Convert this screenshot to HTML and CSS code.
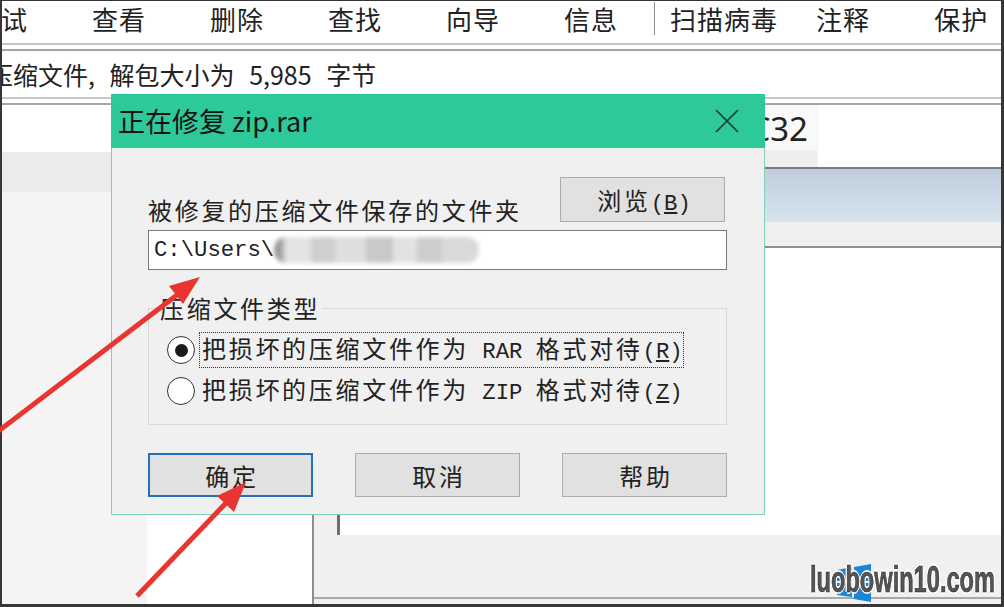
FILE: index.html
```html
<!doctype html>
<html lang="zh-CN">
<head>
	<meta charset="UTF-8">
	<title>正在修复 zip.rar</title>
	<link rel="stylesheet" href="styles.css">
</head>
<body>
	<div class="app">
		<div class="toolbar">
			<span class="tool first">试</span>
			<span class="tool">查看</span>
			<span class="tool">删除</span>
			<span class="tool">查找</span>
			<span class="tool">向导</span>
			<span class="tool">信息</span>
			<span class="tool-sep"></span>
			<span class="tool after-sep">扫描病毒</span>
			<span class="tool short-gap">注释</span>
			<span class="tool">保护</span>
		</div>
		<div class="rule"></div>
		<div class="info">压缩文件, 解包大小为 5,985 字节</div>
		<div class="rule"></div>
		<div class="main">
			<div class="tree">
				<div class="tree-top"></div>
				<div class="tree-band"></div>
			</div>
			<div class="files"></div>
			<div class="splitter"></div>
			<div class="detail">
				<div class="detail-box">
					<div class="list-head">
						<div class="col-name"></div>
						<div class="col-crc">CRC32</div>
						<div class="col-rest"></div>
					</div>
					<div class="row-selected"></div>
					<div class="row-plain"></div>
				</div>
				<div class="status-line"></div>
			</div>
		</div>
	</div>

	<!-- 修复对话框 -->
	<div class="dialog">
		<div class="dialog-title">
			<h1>正在修复 zip.rar</h1>
			<svg class="close" width="24" height="24" viewBox="0 0 24 24">
				<path d="M1 1L23 23M23 1L1 23" stroke="#1b3b31" stroke-width="1.7" fill="none"/>
			</svg>
		</div>
		<div class="dialog-body">
			<div class="path-row">
				<span class="path-label">被修复的压缩文件保存的文件夹</span>
				<button class="btn browse">浏览<span class="mono">(<u>B</u>)</span></button>
			</div>
			<div class="path-input">
				<span class="mono">C:\Users\</span><span class="masked"></span>
			</div>
			<fieldset class="type-group">
				<legend>压缩文件类型</legend>
				<div class="radio-row">
					<span class="radio checked"></span>
					<span class="radio-text focused">把损坏的压缩文件作为<span class="mono"> RAR </span>格式对待<span class="mono">(<u>R</u>)</span></span>
				</div>
				<div class="radio-row">
					<span class="radio"></span>
					<span class="radio-text">把损坏的压缩文件作为<span class="mono"> ZIP </span>格式对待<span class="mono">(<u>Z</u>)</span></span>
				</div>
			</fieldset>
			<div class="actions">
				<button class="btn primary">确定</button>
				<button class="btn">取消</button>
				<button class="btn">帮助</button>
			</div>
		</div>
	</div>

	<!-- 红色箭头标注 -->
	<svg class="marks" width="1004" height="607" viewBox="0 0 1004 607">
		<line x1="-4" y1="433" x2="177" y2="295" stroke="#e83532" stroke-width="5"/>
		<polygon points="200,277 183,304 169,286" fill="#e83532"/>
		<line x1="137" y1="596" x2="226" y2="503" stroke="#e83532" stroke-width="5"/>
		<polygon points="246,482 234,512 217,496" fill="#e83532"/>
	</svg>

	<svg class="wm-logo" width="34" height="38" viewBox="0 0 34 38">
		<polygon points="0,6 15,3 15,17 0,17" fill="#1b86d4"/>
		<polygon points="17,3 34,0 34,17 17,17" fill="#1b86d4"/>
		<polygon points="0,19 15,19 15,33 0,31" fill="#1b86d4"/>
		<polygon points="17,19 34,19 34,38 17,35" fill="#1b86d4"/>
	</svg>
	<div class="watermark">luobowin10.com</div>
</body>
</html>
```

FILE: styles.css
```css
body {
	margin: 0;
	width: 1004px;
	height: 607px;
	overflow: hidden;
	position: relative;
	background: #363636;
	font-family: "Noto Sans CJK SC", sans-serif;
	color: #222;
}
/* 主窗口 */
.app {
	margin: 1px 3px 3px 2px;
	height: 603px;
	background: #fff;
	overflow: hidden;
	display: flex;
	flex-direction: column;
}
.toolbar {
	height: 42px;
	flex: none;
	display: flex;
	align-items: flex-start;
	font-size: 26px;
	line-height: 36px;
	letter-spacing: 1px;
	white-space: nowrap;
}
.tool {
	margin-left: 64px;
}
.tool.first {
	margin-left: -1px;
}
.tool.after-sep {
	margin-left: 15px;
}
.tool.short-gap {
	margin-left: 38px;
}
.tool-sep {
	width: 1px;
	height: 33px;
	margin: 1px 0 0 36px;
	background: #8c8c8c;
}
.rule {
	height: 4px;
	flex: none;
	border-top: 2px solid #c6c6c6;
	border-bottom: 2px solid #a6a6a6;
}
.info {
	height: 46px;
	flex: none;
	margin-left: -14px;
	font-size: 25px;
	line-height: 46px;
	word-spacing: 9px;
	white-space: nowrap;
}
.main {
	flex: 1;
	min-height: 0;
	display: flex;
}
.tree {
	width: 145px;
	background: #f4f4f4;
}
.tree-top {
	height: 47px;
	background: #fff;
}
.tree-band {
	height: 40px;
	background: #ebebeb;
}
.files {
	width: 165px;
	background: #fff;
}
.splitter {
	width: 2px;
	background: #8e8e8e;
}
.detail {
	flex: 1;
	padding-left: 23px;
	background: #f0f0f0;
	display: flex;
	flex-direction: column;
}
.detail-box {
	height: 430px;
	border-left: 3px solid #6e6e6e;
	background: #fff;
}
.list-head {
	height: 62px;
	display: flex;
}
.col-name {
	flex: 1;
}
.col-crc {
	width: 109px;
	padding: 4px 0 0 9px;
	font: 33px/40px "Noto Sans", sans-serif;
	color: #222;
	background: linear-gradient(#f9f9f9 0, #f9f9f9 72%, #eeeeee 72%);
	border-right: 1px solid #f2f2f2;
}
.col-rest {
	width: 183px;
}
.row-selected {
	height: 53px;
	border-top: 2px solid #7b7b7b;
	background: linear-gradient(#c0cedb, #d6e4f0);
}
.row-plain {
	height: 24px;
	background: #efefef;
	border-bottom: 2px solid #8f8f8f;
}
.status-line {
	height: 2px;
	margin: auto 0 5px -23px;
	background: #a9a9a9;
}
/* 对话框 */
.dialog {
	position: absolute;
	left: 111px;
	top: 94px;
	width: 654px;
	box-sizing: border-box;
	border: 1px solid #7fd1b8;
	border-top: 0;
	background: #f0f0f0;
}
.dialog-title {
	height: 54px;
	margin: 0 -1px;
	padding: 0 26px 0 7px;
	background: #2dc99b;
	display: flex;
	align-items: center;
	justify-content: space-between;
}
.dialog-title h1 {
	margin: 0;
	font-size: 27px;
	font-weight: 400;
	line-height: 54px;
	color: #141414;
}
.dialog-body {
	padding: 29px 37px 17px 36px;
	font-size: 24px;
	letter-spacing: 2.7px;
}
.mono {
	font-family: "Liberation Mono", monospace;
	font-size: 22.25px;
	letter-spacing: 0;
}
.path-row {
	display: flex;
	justify-content: space-between;
	align-items: flex-end;
}
.path-label {
	line-height: 30px;
	margin-bottom: -3px;
}
.btn {
	width: 165px;
	height: 44px;
	box-sizing: border-box;
	padding: 0 0 0 3px;
	border: 1px solid #adadad;
	background: #e1e1e1;
	font: inherit;
	letter-spacing: inherit;
	color: #222;
}
.btn.browse {
	height: 45px;
	margin-right: 2px;
}
.btn.primary {
	border: 2px solid #2470be;
}
.path-input {
	margin-top: 8px;
	height: 40px;
	box-sizing: border-box;
	padding-left: 5px;
	border: 1px solid #7a7a7a;
	background: #fff;
	display: flex;
	align-items: center;
}
.masked {
	width: 205px;
	height: 26px;
	border-radius: 12px;
	background: linear-gradient(90deg, #9a9a9a 0, #9a9a9a 3%, #e4e4e4 6%, #e4e4e4 18%, #cfcfcf 18%, #cfcfcf 30%, #dedede 30%, #dedede 45%, #c9c9c9 45%, #c9c9c9 58%, #e2e2e2 58%, #e2e2e2 70%, #cdcdcd 70%, #cdcdcd 82%, #d9d9d9 82%);
	filter: blur(2px);
}
.type-group {
	margin: 23px 0 0;
	padding: 12px 0 18px;
	border: 1px solid #d8d8d8;
	min-width: 0;
}
.type-group legend {
	margin-left: 9px;
	padding: 0 2px;
	line-height: 30px;
}
.radio-row {
	height: 30px;
	margin-left: 18px;
	display: flex;
	align-items: center;
}
.radio-row + .radio-row {
	margin-top: 11px;
}
.radio {
	width: 28px;
	height: 28px;
	box-sizing: border-box;
	margin-right: 5px;
	border: 1.5px solid #333;
	border-radius: 50%;
	background: #fff;
	display: grid;
	place-items: center;
	flex: none;
}
.radio.checked::after {
	content: "";
	width: 13px;
	height: 13px;
	border-radius: 50%;
	background: #1a1a1a;
}
.radio-text {
	padding-left: 2px;
	line-height: 30px;
	white-space: nowrap;
}
.radio-text.focused {
	outline: 1px dotted #333;
}
.actions {
	margin-top: 28px;
	display: flex;
	justify-content: space-between;
}
/* 标注与水印 */
.marks {
	position: absolute;
	left: 0;
	top: 0;
}
.wm-logo {
	position: absolute;
	left: 837px;
	top: 564px;
}
.watermark {
	position: absolute;
	left: 810px;
	top: 562px;
	font: bold 36px/36px "Liberation Sans", sans-serif;
	color: #555;
	white-space: nowrap;
	transform: scaleX(0.656);
	transform-origin: left top;
	-webkit-text-stroke: 0.6px #222;
	text-shadow: 2px 0 0 #fff, -2px 0 0 #fff, 0 2px 0 #fff, 0 -2px 0 #fff;
}
```
